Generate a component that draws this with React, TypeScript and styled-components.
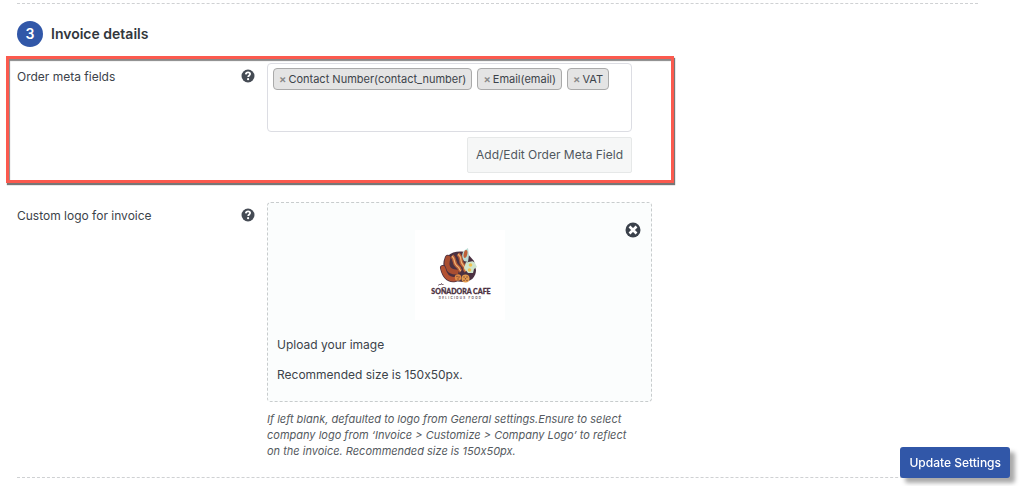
import React from "react";
import styled, { createGlobalStyle } from "styled-components";

const GlobalStyle = createGlobalStyle`
  * { box-sizing: border-box; }
  body {
    margin: 0;
    background: #fff;
    color: #3c434a;
    font: 12px/20px Inter, "Liberation Sans", sans-serif;
    font-feature-settings: "calt" 0;
  }
  button, input { font: inherit; font-feature-settings: inherit; color: inherit; margin: 0; padding: 0; }
`;

const Page = styled.main`
  padding: 3px 46px 8px 17px;
`;

const Divider = styled.hr`
  margin: 0;
  border: 0;
  border-top: 1px dashed #cfd1d3;
`;

const Heading = styled.h2`
  display: flex;
  align-items: center;
  gap: 8px;
  margin: 17px 0 9px;
  font-size: 14px;
  line-height: 26px;
  font-weight: 600;
  color: #32373c;
`;

const Step = styled.span`
  width: 26px;
  height: 26px;
  border-radius: 50%;
  background: #3157a8;
  color: #fff;
  text-align: center;
`;

const Row = styled.section<{ $marked?: boolean }>`
  display: grid;
  grid-template-columns: 224px 26px minmax(0, 1fr);
  max-width: ${(p) => (p.$marked ? "668px" : "635px")};
  ${(p) =>
    p.$marked &&
    `
    margin: 0 0 19px -11px;
    padding: 4px 39px 7px 8px;
    border: 3px solid #fb5a4e;
    box-shadow: 1px 2px 1px #777, inset 1px 2px 1px #888;
  `}
`;

const Label = styled.label`
  padding-top: 4px;
`;

const HelpButton = styled.button`
  width: 14px;
  height: 14px;
  margin-top: 6px;
  border: 0;
  background: none;
  cursor: pointer;
`;

const HelpIcon = styled.svg`
  display: block;
  width: 14px;
  height: 14px;
`;

const Stack = styled.div`
  display: flex;
  flex-direction: column;
`;

const TagBox = styled.div`
  display: flex;
  flex-wrap: wrap;
  align-content: flex-start;
  gap: 5px;
  min-height: 69px;
  padding: 4px 5px;
  border: 1px solid #dcdde3;
  border-radius: 4px;
`;

const Tag = styled.span`
  display: flex;
  align-items: center;
  gap: 2px;
  height: 22px;
  padding: 0 5px;
  border: 1px solid #aaa;
  border-radius: 4px;
  background: #e4e4e4;
  font-size: 11px;
  line-height: 20px;
`;

const RemoveTag = styled.button`
  border: 0;
  background: none;
  color: #888;
  font-weight: 600;
  cursor: pointer;
`;

const TagInput = styled.input`
  flex: 1;
  min-width: 8px;
  width: 8px;
  height: 22px;
  border: 0;
  outline: 0;
  background: transparent;
`;

const SecondaryButton = styled.button`
  align-self: flex-end;
  height: 36px;
  margin-top: 5px;
  padding: 0 8px;
  border: 1px solid #e6e8e8;
  border-radius: 2px;
  background: #f6f7f7;
  color: #50575e;
  cursor: pointer;
`;

const Upload = styled.div`
  position: relative;
  padding: 27px 9px 16px;
  border: 1px dashed #c8cccd;
  border-radius: 4px;
  background: #fbfdfd;
`;

const UploadText = styled.p`
  margin: 0 0 10px;
  &:last-child { margin-bottom: 0; }
`;

const RemoveLogo = styled.button`
  position: absolute;
  top: 19px;
  right: 10px;
  width: 16px;
  height: 16px;
  border: 0;
  background: none;
  cursor: pointer;
  svg { display: block; }
`;

const Logo = styled.svg`
  display: block;
  width: 90px;
  height: 90px;
  margin: 0 auto 15px 138px;
  background: #fff;
`;

const Hint = styled.p`
  max-width: 365px;
  margin: 9px 0 18px;
  color: #555a60;
  font-size: 11px;
  line-height: 16px;
  font-style: italic;
`;

const SaveButton = styled.button`
  position: fixed;
  right: 14px;
  bottom: 8px;
  height: 31px;
  padding: 0 9px;
  border: 0;
  border-radius: 3px;
  background: #3157a8;
  color: #fff;
  font-weight: 500;
  box-shadow: 5px 5px 4px #aaa;
  cursor: pointer;
`;

const Help = ({ topic }: { topic: string }) => (
  <HelpButton type="button" aria-label={`Help: ${topic}`}>
    <HelpIcon viewBox="0 0 14 14">
      <circle cx="7" cy="7" r="6.5" fill="#454b54" />
      <path d="M4.8 5.4C5 3.9 5.9 3.4 7.1 3.4c1.2 0 2 .7 2 1.7 0 1.5-1.9 1.3-1.9 3" fill="none" stroke="#fff" strokeWidth="1.8" />
      <circle cx="7.1" cy="10.2" r="1.1" fill="#fff" />
    </HelpIcon>
  </HelpButton>
);

const CafeLogo = () => (
  <Logo viewBox="0 0 90 90" role="img" aria-label="Soñadora Cafe, delicious food">
    <path d="M31 28C35 22 45 20 52 23L59 31 61 40C61 47 56 52 48 52L38 51C31 47 28 37 31 28Z" fill="#4b3141" />
    <path d="M33 28C29 38 34 42 42 43" fill="none" stroke="#4b3141" strokeWidth="6.5" strokeLinecap="round" />
    <path d="M33 28C30 37 34 42 41 42" fill="none" stroke="#a94e31" strokeWidth="5" strokeLinecap="round" />
    <path d="M28 38C30 46 34 50 40 49" fill="none" stroke="#4b3141" strokeWidth="6" strokeLinecap="round" />
    <path d="M28 38C30 46 34 50 40 49" fill="none" stroke="#b45233" strokeWidth="4.5" strokeLinecap="round" />
    <path d="M37 26C41 30 38 33 42 36S43 39 46 41M43 24C48 28 44 31 48 35S48 38 51 41" fill="none" stroke="#b55b36" strokeWidth="4" />
    <path d="M37 26C41 30 38 33 42 36S43 39 46 41M43 24C48 28 44 31 48 35S48 38 51 41" fill="none" stroke="#eeb276" strokeWidth="1.3" />
    <path d="M50 20L53 18 54 25 53 32 49 31C46 26 47 22 50 20Z" fill="#badbd3" />
    <ellipse cx="50.5" cy="24" rx="1.8" ry="4" fill="#bd6038" transform="rotate(12 50.5 24)" />
    <path d="M51 32C55 33 57 29 60 33L62 37 59 39 58 43 53 43 49 38Z" fill="#cfe4cd" />
    <circle cx="55.5" cy="35" r="1.8" fill="#f1c34f" />
    <circle cx="54.5" cy="40" r="1.8" fill="#f1c34f" />
    <circle cx="43" cy="47.5" r="3.2" fill="#df8a46" />
    <circle cx="50.5" cy="48.5" r="4" fill="#e49b4d" />
    <g fill="#7a4434">
      <circle cx="42" cy="46.5" r=".7" /><circle cx="44" cy="47" r=".7" /><circle cx="43" cy="49" r=".7" />
      <circle cx="49" cy="47" r=".7" /><circle cx="52" cy="47" r=".7" /><circle cx="50.5" cy="48.8" r=".7" /><circle cx="49" cy="50.5" r=".7" /><circle cx="52" cy="50.5" r=".7" />
    </g>
    <path d="M23.5 55.5L24.5 54 25.5 55 26.5 53.5 27.5 55 28.5 54" fill="none" stroke="#4b3141" strokeWidth=".8" />
    <text x="46" y="64" textAnchor="middle" fill="#4b3141" stroke="#4b3141" strokeWidth=".3" fontFamily="Lato, sans-serif" fontWeight="900" fontSize="7">SOÑADORA CAFE</text>
    <text x="45.5" y="69" textAnchor="middle" fill="#6b5661" fontFamily="Inter, sans-serif" fontWeight="700" fontSize="3" letterSpacing="1.3">DELICIOUS FOOD</text>
  </Logo>
);

const fields = ["Contact Number(contact_number)", "Email(email)", "VAT"];

export default function App() {
  return (
    <>
      <GlobalStyle />
      <Page>
        <Divider />
        <Heading><Step>3</Step>Invoice details</Heading>
        <Row $marked>
          <Label htmlFor="meta">Order meta fields</Label>
          <Help topic="Order meta fields" />
          <Stack>
            <TagBox>
              {fields.map((name) => (
                <Tag key={name}>
                  <RemoveTag type="button" aria-label={`Remove ${name}`}>×</RemoveTag>
                  {name}
                </Tag>
              ))}
              <TagInput id="meta" type="text" />
            </TagBox>
            <SecondaryButton type="button">Add/Edit Order Meta Field</SecondaryButton>
          </Stack>
        </Row>
        <Row>
          <Label as="span">Custom logo for invoice</Label>
          <Help topic="Custom logo for invoice" />
          <Stack>
            <Upload>
              <RemoveLogo type="button" aria-label="Remove logo">
                <svg width="16" height="16" viewBox="0 0 16 16">
                  <circle cx="8" cy="8" r="7.5" fill="#3a414b" />
                  <path d="M4.5 4.5L11.5 11.5M11.5 4.5L4.5 11.5" stroke="#fff" strokeWidth="2.6" />
                </svg>
              </RemoveLogo>
              <CafeLogo />
              <UploadText>Upload your image</UploadText>
              <UploadText>Recommended size is 150x50px.</UploadText>
            </Upload>
            <Hint>
              If left blank, defaulted to logo from General settings.Ensure to select company logo
              from ‘Invoice &gt; Customize &gt; Company Logo’ to reflect on the invoice. Recommended
              size is 150x50px.
            </Hint>
          </Stack>
        </Row>
        <Divider />
        <SaveButton type="submit">Update Settings</SaveButton>
      </Page>
    </>
  );
}
